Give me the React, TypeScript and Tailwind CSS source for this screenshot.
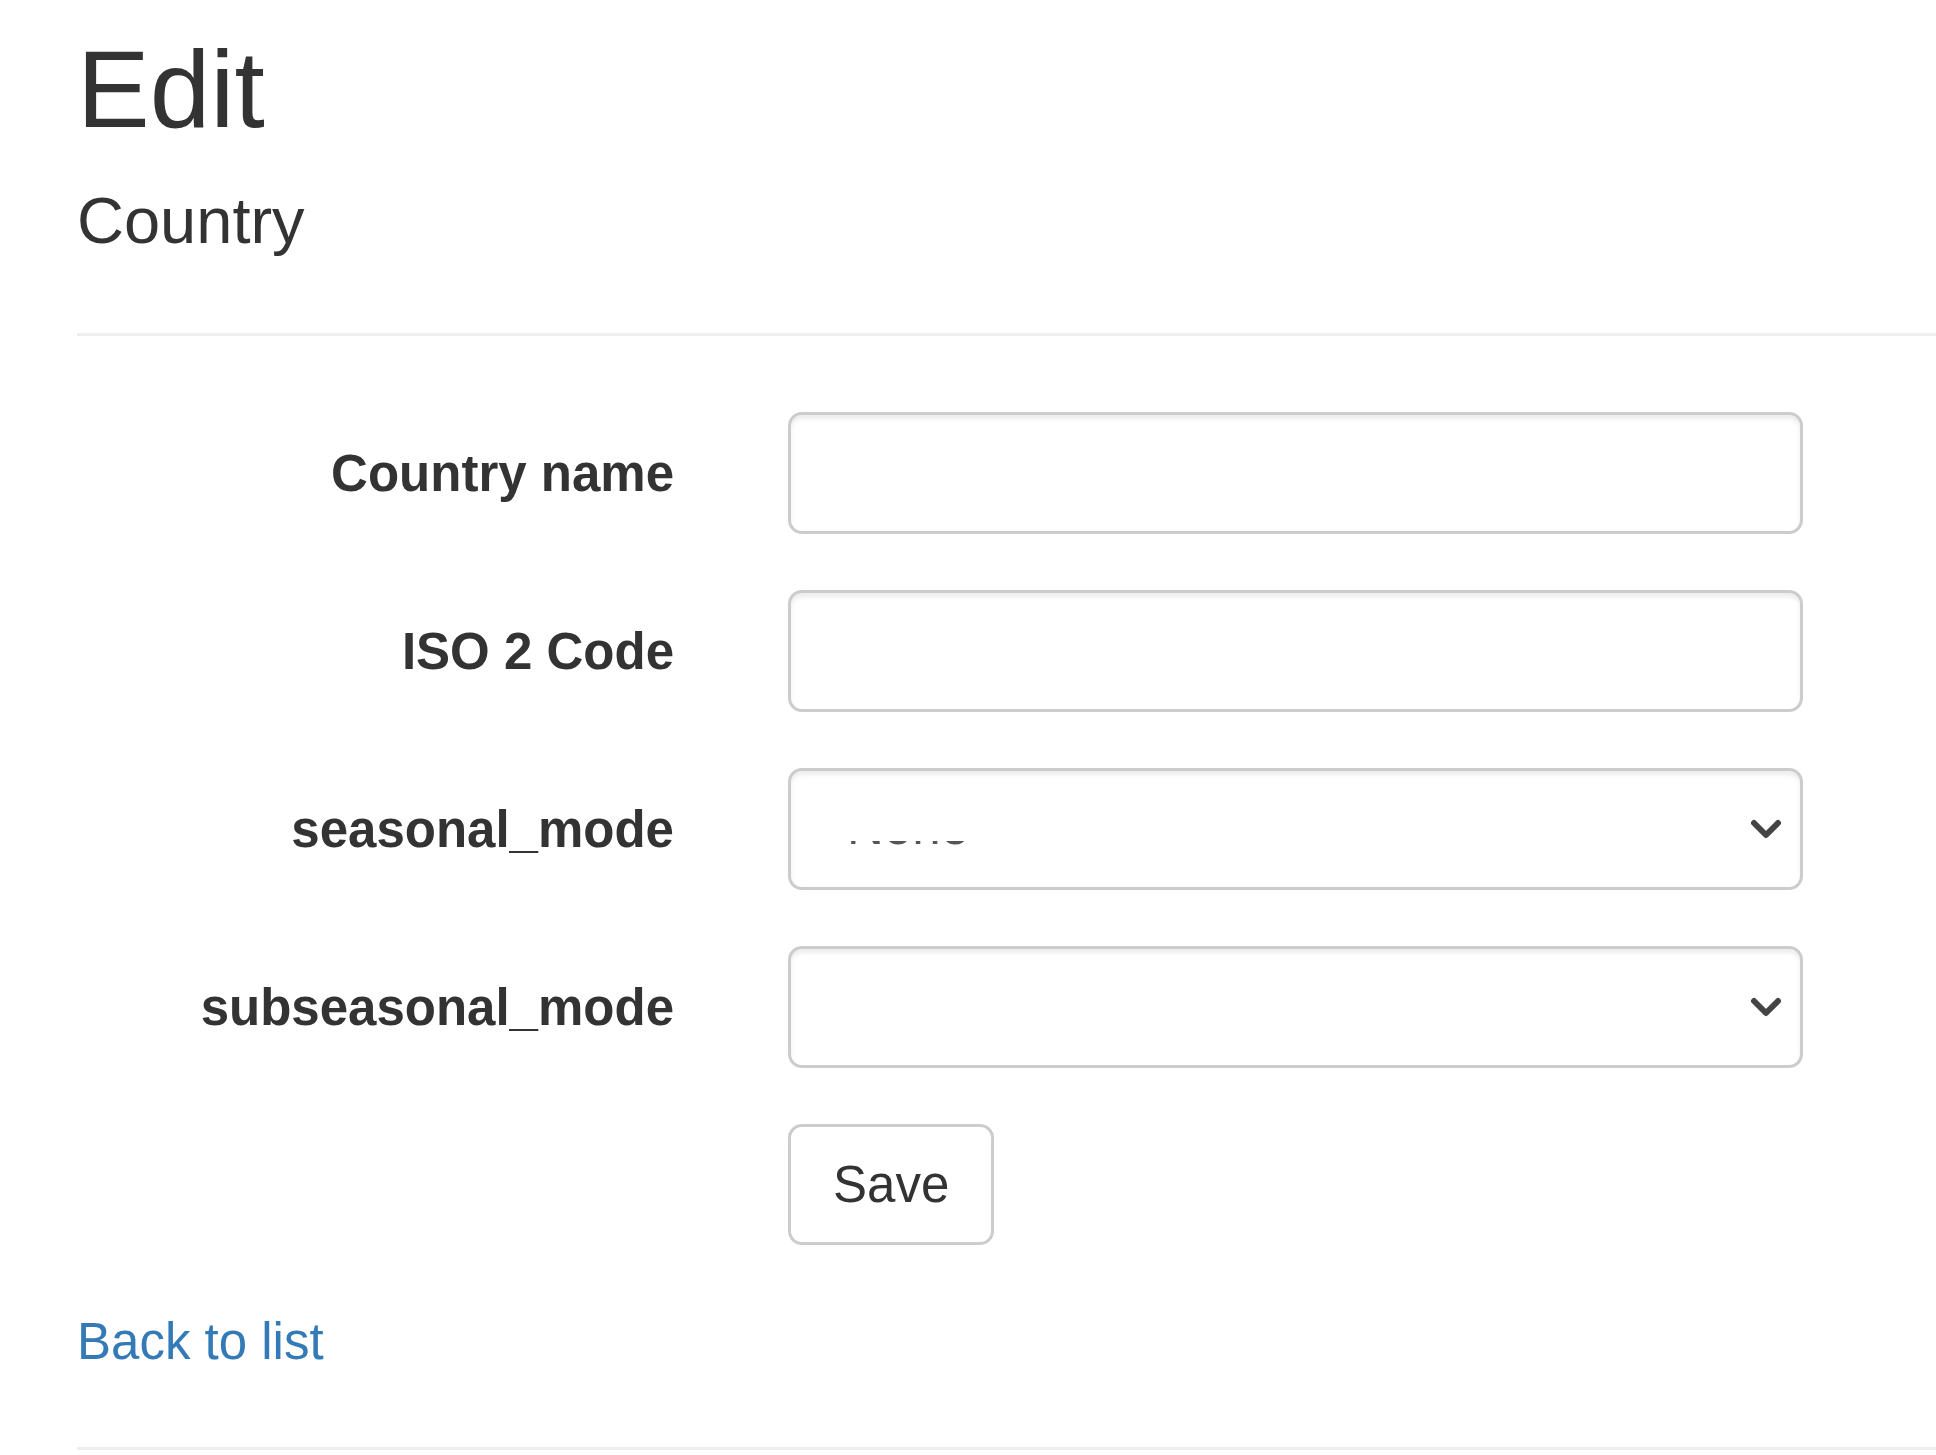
import type { FC, ReactNode } from 'react';

const FONT = { fontFamily: '"Liberation Sans", Arial, Helvetica, sans-serif' };

const Row: FC<{ label: string; children: ReactNode }> = ({ label, children }) => (
  <div className="flex items-center gap-[114px] mb-[56px]">
    <label className="w-[597px] text-right font-bold text-[51px] leading-[73px] text-[#333333]">{label}</label>
    <div className="w-[1015px]">{children}</div>
  </div>
);

const TextBox: FC = () => (
  <input
    type="text"
    className="block w-full h-[122px] rounded-[14px] border-[3px] border-[#cccccc] bg-white px-[44px] text-[51px] text-[#555555] outline-none shadow-[inset_0_4px_4px_rgba(0,0,0,0.075)]"
  />
);

// the selected option is drawn clipped, only the foot of its glyphs shows
const SelectBox: FC<{ value?: string }> = ({ value }) => (
  <div className="flex items-center justify-between w-full h-[122px] rounded-[14px] border-[3px] border-[#cccccc] bg-white pl-[56px] pr-[18px] shadow-[inset_0_4px_4px_rgba(0,0,0,0.075)]">
    <div className="h-[4px] overflow-hidden mt-[28px]">
      {value && (
        <div className="text-[51px] leading-[51px] text-[#555555] -mt-[40px]">{value}</div>
      )}
    </div>
    <svg width="32" height="22" viewBox="0 0 32 22" className="shrink-0">
      <polyline points="4,5 16,17 28,5" fill="none" stroke="#444444" strokeWidth="6" strokeLinecap="round" strokeLinejoin="round" />
    </svg>
  </div>
);

export default function App() {
  return (
    <div className="min-h-screen bg-white pl-[77px] pt-[29px] text-[#333333]" style={FONT}>
      <h2 className="text-[109px] leading-[120px] font-normal">Edit</h2>
      <h4 className="mt-[36px] text-[65px] leading-[72px] font-normal">Country</h4>
      <div className="mt-[76px] h-[3px] bg-[#eeeeee]" />

      <form className="mt-[76px]" onSubmit={(e) => e.preventDefault()}>
        <Row label="Country name">
          <TextBox />
        </Row>
        <Row label="ISO 2 Code">
          <TextBox />
        </Row>
        <Row label="seasonal_mode">
          <SelectBox value="None" />
        </Row>
        <Row label="subseasonal_mode">
          <SelectBox />
        </Row>
        <div className="flex gap-[114px] mb-[60px]">
          <div className="w-[597px]" />
          <button
            type="submit"
            className="h-[121px] px-[42px] rounded-[14px] border-[3px] border-[#cccccc] bg-white text-[51px] leading-[73px] text-[#333333]"
          >
            Save
          </button>
        </div>
      </form>

      <div className="text-[51px] leading-[73px]">
        <a href="#" className="text-[#337ab7]">Back to list</a>
      </div>
      <div className="mt-[69px] h-[3px] bg-[#eeeeee]" />
    </div>
  );
}
